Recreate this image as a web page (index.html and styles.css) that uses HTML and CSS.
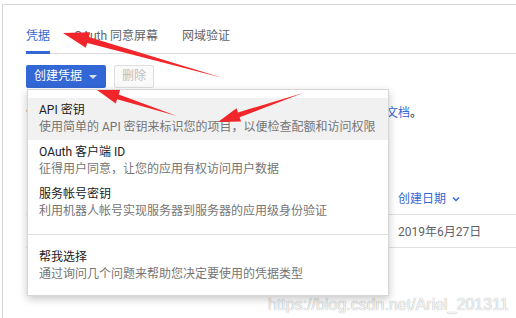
FILE: index.html
```html
<!DOCTYPE html>
<html lang="zh-CN">
<head>
  <meta charset="UTF-8">
  <title>凭据</title>
  <link rel="stylesheet" href="styles.css">
</head>
<body>
  <div class="panel">
    <nav class="tabs">
      <a class="tab active">凭据</a>
      <a class="tab">OAuth 同意屏幕</a>
      <a class="tab">网域验证</a>
    </nav>

    <div class="toolbar">
      <button class="btn-primary">创建凭据<span class="caret"></span></button>
      <button class="btn" disabled>删除</button>

      <div class="menu">
        <div class="item hover">
          <div class="title">API 密钥</div>
          <div class="desc">使用简单的 API 密钥来标识您的项目，以便检查配额和访问权限</div>
        </div>
        <div class="item">
          <div class="title">OAuth 客户端 ID</div>
          <div class="desc">征得用户同意，让您的应用有权访问用户数据</div>
        </div>
        <div class="item">
          <div class="title">服务帐号密钥</div>
          <div class="desc">利用机器人帐号实现服务器到服务器的应用级身份验证</div>
        </div>
        <div class="divider"></div>
        <div class="item">
          <div class="title">帮我选择</div>
          <div class="desc">通过询问几个问题来帮助您决定要使用的凭据类型</div>
        </div>
      </div>
    </div>

    <p class="intro">创建凭据以访问您已启用的应用程序接口。要了解更多详情，请参阅<a>文档</a>。</p>

    <table class="keys">
      <thead>
        <tr><th class="name"></th><th>创建日期
          <svg class="chev" width="8" height="6" viewBox="0 0 8 6"><path d="M1 1.5 4 4.5 7 1.5" fill="none" stroke="#3367d6" stroke-width="1.4"/></svg>
        </th></tr>
      </thead>
      <tbody>
        <tr><td class="name"></td><td>2019年6月27日</td></tr>
      </tbody>
    </table>
  </div>

  <div class="watermark">https://blog.csdn.net/Ariel_201311</div>

  <svg class="marks" width="516" height="318" viewBox="0 0 516 318">
    <polygon points="63,33 90.2,32.3 88.8,37.1 223,78 87.2,42.9 85.8,47.7"/>
    <polygon points="97,90 120.1,90.1 118.7,94.4 177,116 117.1,99.2 115.7,103.5"/>
    <polygon points="218,122 236.5,108.3 238,112.5 303,93 239.6,117.3 241.1,121.5"/>
  </svg>
</body>
</html>
```

FILE: styles.css
```css
* {
  box-sizing: border-box;
}

html {
  font-family: Roboto, "Noto Sans CJK SC", sans-serif;
  font-size: 12px;
  color: #202124;
  background: #fff;
}

body {
  margin: 0;
  height: 318px;
  overflow: hidden;
  position: relative;
}

.panel {
  margin: 4px 0 0 2px;
  height: 314px;
  border-top: 1px solid #d6d6d6;
  border-left: 1px solid #d6d6d6;
  padding-left: 23px;
}

.tabs {
  display: flex;
  gap: 24px;
  margin-top: 19px;
  border-bottom: 1px solid #dadada;
}

.tab {
  padding: 4px 0 9px;
  line-height: 17px;
  margin-bottom: -1px;
  color: #5f6368;
}

.tab.active {
  color: #3367d6;
  box-shadow: inset 0 -3px 0 #3367d6;
}

.toolbar {
  position: relative;
  display: flex;
  gap: 8px;
  margin-top: 11px;
}

button {
  font: inherit;
  height: 23px;
  line-height: 17px;
  border-radius: 2px;
}

.btn-primary {
  display: flex;
  align-items: center;
  padding: 0 9px 0 8px;
  color: #fff;
  background: #3367d6;
  border: 0;
}

.caret {
  margin-left: 7px;
  width: 0;
  height: 0;
  border-left: 4px solid transparent;
  border-right: 4px solid transparent;
  border-top: 4px solid rgba(255, 255, 255, 0.8);
}

.btn {
  padding: 0 7px;
  color: #bdbdbd;
  background: #fafafa;
  border: 1px solid #dedede;
}

.menu {
  position: absolute;
  left: 1px;
  top: 24px;
  width: 362px;
  padding: 8px 0;
  background: #fff;
  border: 1px solid #d6d6d6;
  box-shadow: 0 3px 8px rgba(0, 0, 0, 0.22);
  z-index: 2;
}

.item {
  padding: 4px 11px;
  line-height: 17px;
}

.item.hover {
  background: #f1f1f1;
}

.title {
  color: #202124;
}

.desc {
  color: #757575;
}

.divider {
  margin: 10px 0;
  border-top: 1px solid #e0e0e0;
}

.intro {
  margin: 17px 0 0;
  line-height: 17px;
  color: #202124;
}

.intro a {
  color: #3367d6;
}

.keys {
  width: 100%;
  margin-top: 60px;
  border-collapse: collapse;
}

.keys th,
.keys td {
  padding: 0 0 0 10px;
  text-align: left;
  font-weight: 400;
  border-bottom: 1px solid #e0e0e0;
}

.keys th {
  height: 32px;
  color: #3367d6;
}

.keys td {
  height: 33px;
  color: #5f6368;
}

.keys .name {
  width: 362px;
}

.chev {
  margin-left: 3px;
  vertical-align: 1px;
}

.watermark {
  position: absolute;
  left: 268px;
  top: 296px;
  font-family: "Liberation Sans", Arial, sans-serif;
  font-size: 16px;
  line-height: 18px;
  color: rgba(255, 255, 255, 0.9);
  text-shadow: 0 0 1px rgba(0, 0, 0, 0.45);
  white-space: nowrap;
}

.marks {
  position: absolute;
  left: 0;
  top: 0;
  pointer-events: none;
  z-index: 5;
}

.marks polygon {
  fill: #f2262a;
}
```
